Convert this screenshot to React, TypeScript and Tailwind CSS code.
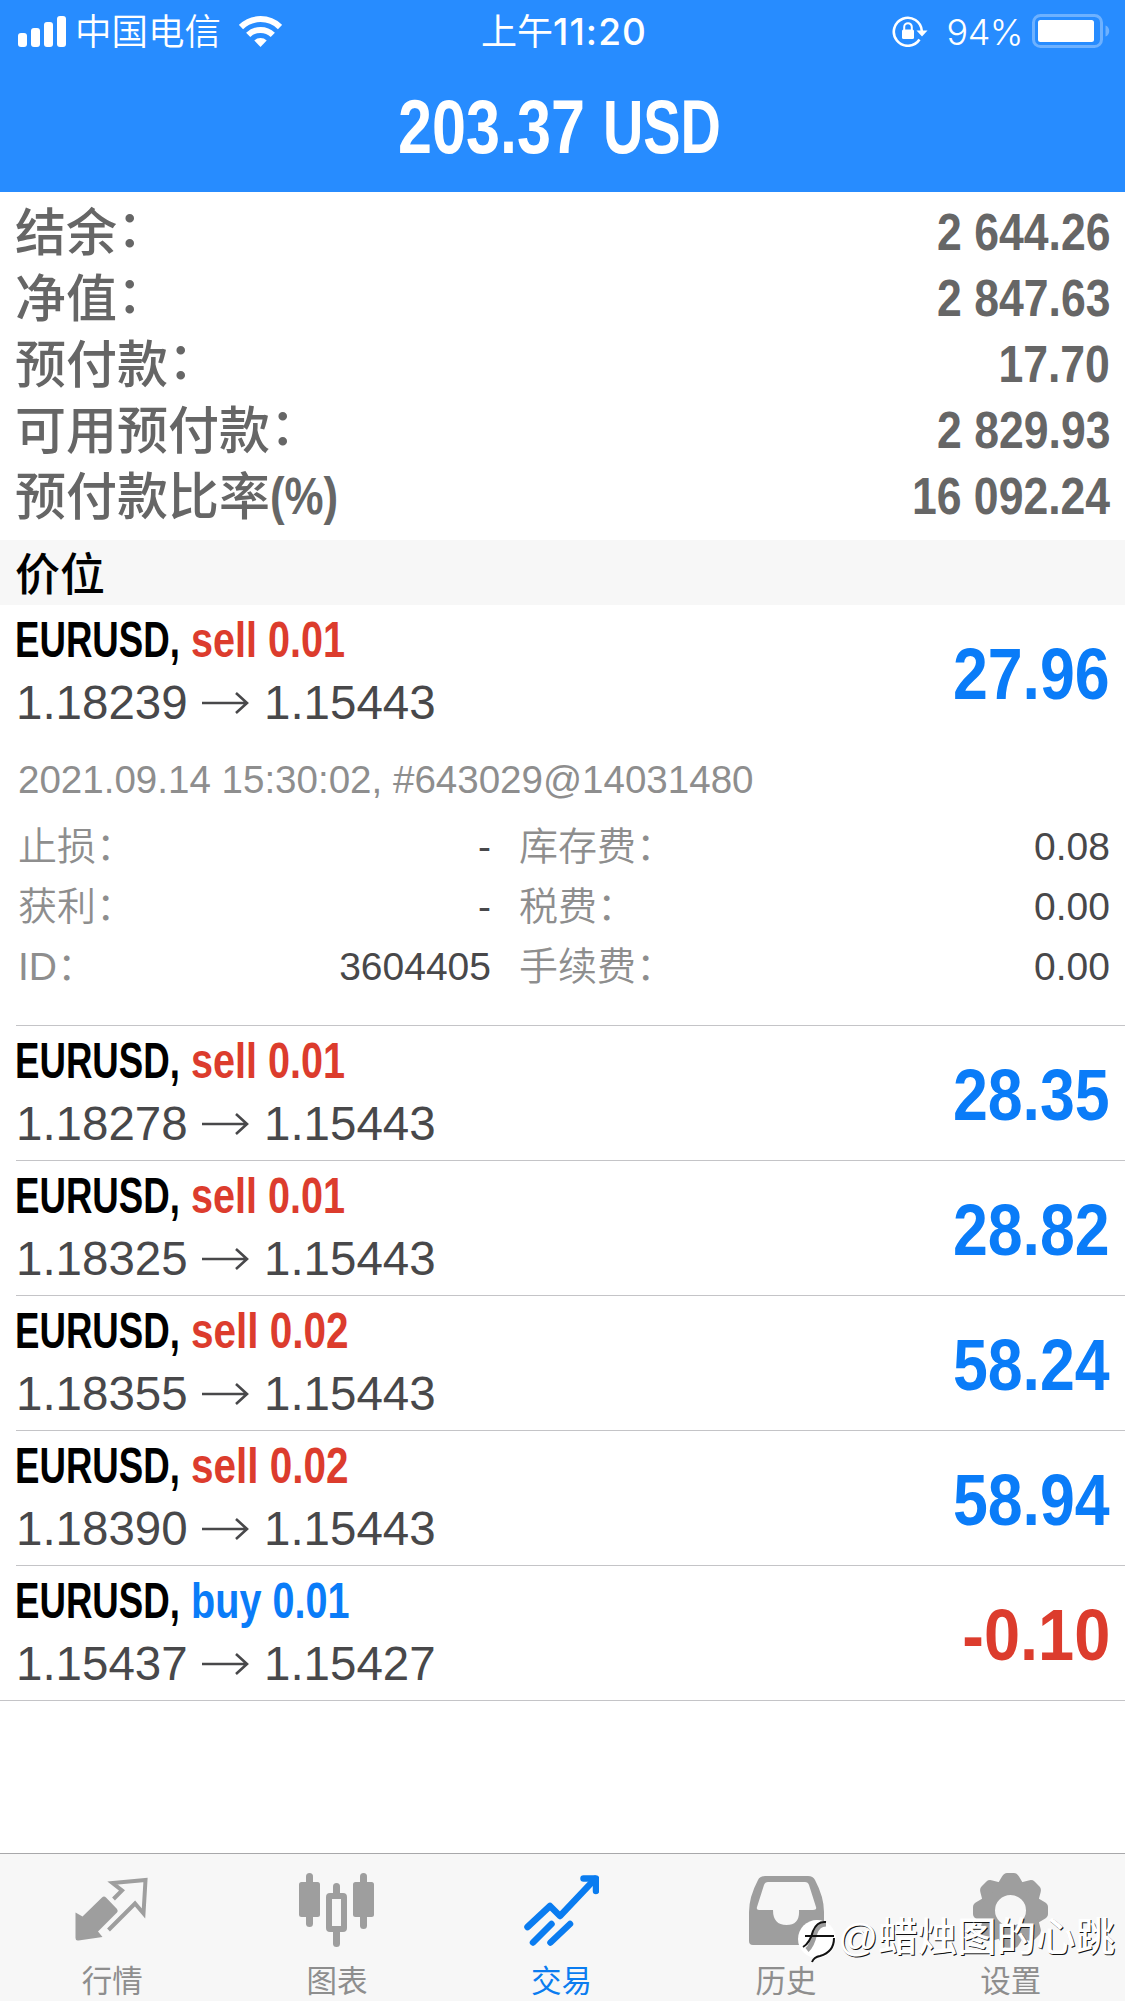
import { ReactNode } from 'react'

type Position = {
  side: 'sell' | 'buy'
  volume: string
  open: string
  current: string
  profit: string
}

const summary = [
  { label: '结余', suffix: '：', value: '2 644.26' },
  { label: '净值', suffix: '：', value: '2 847.63' },
  { label: '预付款', suffix: '：', value: '17.70' },
  { label: '可用预付款', suffix: '：', value: '2 829.93' },
  { label: '预付款比率', suffix: '(%)', value: '16 092.24' },
]

const positions: Position[] = [
  { side: 'sell', volume: '0.01', open: '1.18239', current: '1.15443', profit: '27.96' },
  { side: 'sell', volume: '0.01', open: '1.18278', current: '1.15443', profit: '28.35' },
  { side: 'sell', volume: '0.01', open: '1.18325', current: '1.15443', profit: '28.82' },
  { side: 'sell', volume: '0.02', open: '1.18355', current: '1.15443', profit: '58.24' },
  { side: 'sell', volume: '0.02', open: '1.18390', current: '1.15443', profit: '58.94' },
  { side: 'buy', volume: '0.01', open: '1.15437', current: '1.15427', profit: '-0.10' },
]

const details = [
  ['止损：', '-', '库存费：', '0.08'],
  ['获利：', '-', '税费：', '0.00'],
  ['ID：', '3604405', '手续费：', '0.00'],
]

function StatusBar() {
  return (
    <div className="flex h-[62px] items-center text-white font-['Inter','Noto_Sans_CJK_SC',sans-serif]">
      <div className="flex flex-1 items-center pl-[18px]">
        <svg width="49" height="33" viewBox="0 0 49 33" fill="currentColor">
          <rect x="0" y="18" width="9" height="14" rx="3" />
          <rect x="13" y="13" width="9" height="19" rx="3" />
          <rect x="26" y="7" width="9" height="25" rx="3" />
          <rect x="39" y="1" width="9" height="31" rx="3" />
        </svg>
        <span className="mt-[3px] ml-[8px] text-[36.5px] leading-none font-[350]">中国电信</span>
        <svg className="ml-[18px]" width="43" height="32" viewBox="0 0 43 32" fill="none" stroke="currentColor" strokeWidth="6">
          <path d="M2 12a28 28 0 0 1 39 0" />
          <path d="M9.200 19.900a17.600 17.600 0 0 1 24.600 0" />
          <path d="M21.500 32l-6.200-6.500a9 9 0 0 1 12.400 0z" fill="currentColor" stroke="none" />
        </svg>
      </div>
      <div className="flex items-center text-[36px] leading-none">
        <span className="mt-[2px]">上午</span>
        <span className="mt-px text-[37px] font-medium tracking-[1.1px]">11:20</span>
      </div>
      <div className="flex flex-1 items-center justify-end pr-[15px]">
        <svg width="36" height="32" viewBox="0 0 36 32" fill="none" stroke="currentColor" strokeWidth="2.6">
          <path d="M27.500 24.500A14 14 0 1 1 29.800 16" />
          <path d="M24.500 15.500h11l-5.500 6z" fill="currentColor" stroke="none" />
          <rect x="10" y="14.500" width="12" height="9.500" rx="1.500" fill="currentColor" stroke="none" />
          <path d="M12.200 15v-3a3.800 3.800 0 0 1 7.600 0v3" strokeWidth="2" />
        </svg>
        <span className="mt-px ml-[18px] text-[36px] leading-none font-light tracking-[-0.5px]">94%</span>
        <svg className="ml-[9px]" width="78" height="34" viewBox="0 0 78 34">
          <rect x="1.500" y="1.500" width="68" height="31" rx="7" fill="none" stroke="#6db1ff" strokeWidth="3" />
          <rect x="6" y="6" width="56" height="22" rx="2.500" fill="#fff" />
          <path d="M73.500 11.500c5 1.500 5 9.500 0 11z" fill="#6db1ff" />
        </svg>
      </div>
    </div>
  )
}

function Summary() {
  return (
    <div className="h-[348px] pt-[7px] text-[#666]">
      {summary.map(row => (
        <div key={row.label} className="flex h-[66px] items-center justify-between pr-[15px] pl-[15px]">
          <div className="flex items-center pt-[3px]">
            <span className="text-[51px] leading-[66px] font-medium">{row.label}</span>
            {row.suffix === '：' ? (
              <span className="-mt-[8px] text-[51px] leading-[58px] font-medium">{row.suffix}</span>
            ) : (
              <span className="-mt-[2px] origin-left scale-x-[0.86] text-[51px] leading-[64px] font-bold">{row.suffix}</span>
            )}
          </div>
          <span className="-mt-px origin-right scale-x-[0.865] text-[51.5px] leading-[66px] font-bold">{row.value}</span>
        </div>
      ))}
    </div>
  )
}

function PositionHead({ position }: { position: Position }) {
  const loss = position.profit.startsWith('-')
  return (
    <div className="flex h-[134px] justify-between pr-[15px] pl-[15px]">
      <div>
        <div className="flex h-[66px] pt-[6px] text-[49.5px] leading-[57px] font-bold whitespace-nowrap">
          <span className="w-[176px] origin-left scale-x-[0.74] text-black">EURUSD,</span>
          <span
            className={`origin-left ${position.volume === '0.02' ? 'scale-x-[0.818]' : 'scale-x-[0.8]'} ${position.side === 'sell' ? 'text-[#dc3c2d]' : 'text-[#0a7cf8]'}`}
          >
            {position.side} {position.volume}
          </span>
        </div>
        <div className="flex items-center pl-px text-[47.5px] leading-[63px] text-[#48484a]">
          <span className="w-[186px]">{position.open}</span>
          <svg className="mr-[14px]" width="48" height="24" viewBox="0 0 48 24" fill="none" stroke="currentColor" strokeWidth="2.6">
            <path d="M0 12h45M34 2l11 10-11 10" />
          </svg>
          <span>{position.current}</span>
        </div>
      </div>
      <div
        className={`origin-right pt-[2px] text-[73px] leading-[134px] font-bold ${loss ? 'scale-x-[0.89] text-[#dc3c2d]' : 'scale-x-[0.858] text-[#0a7cf8]'}`}
      >
        {position.profit}
      </div>
    </div>
  )
}

function PositionDetails() {
  return (
    <div className="h-[286px] pt-[11px] pr-[15px] pl-[18px] text-[39px] text-[#8e8e8e]">
      <div className="origin-left scale-x-[0.988] leading-[60px] whitespace-nowrap">
        2021.09.14 15:30:02, #643029@14031480
      </div>
      <div className="mt-[7px]">
        {details.map(([leftLabel, leftValue, rightLabel, rightValue]) => (
          <div key={leftLabel} className="flex h-[60px] leading-[60px]">
            <div className="flex w-[473px] justify-between">
              <span className="font-[350]">{leftLabel}</span>
              <span className="text-[#48484a]">{leftValue}</span>
            </div>
            <div className="ml-[28px] flex flex-1 justify-between">
              <span className="font-[350]">{rightLabel}</span>
              <span className="text-[#48484a]">{rightValue}</span>
            </div>
          </div>
        ))}
      </div>
    </div>
  )
}

const gearTeeth = [0, 45, 90, 135, 180, 225, 270, 315]

const tabs: { label: string; active?: boolean; icon: ReactNode }[] = [
  {
    label: '行情',
    icon: (
      <>
        <path d="M.5 39.500l7 4L27 24.500q2-2 4 0l11 11.500q1.500 2 0 3.500L23 58.500l4.500 5.500-24 3.500q-3 .5-3-2.500z" fill="currentColor" />
        <path d="M38.500 26l8.500-8.500-9.500-7.500L70.500 7l-2 33.500-8.500-10L33.500 57" fill="none" stroke="currentColor" strokeWidth="4" />
      </>
    ),
  },
  {
    label: '图表',
    icon: (
      <>
        <g fill="currentColor">
          <rect x="0" y="9" width="21" height="35" rx="2.500" />
          <rect x="7" y="0" width="7" height="54" rx="3.500" />
          <rect x="54" y="9" width="21" height="35" rx="2.500" />
          <rect x="61" y="0" width="7" height="56" rx="3.500" />
          <rect x="34" y="10" width="7" height="15" rx="3.500" />
          <rect x="34" y="55" width="7" height="19" rx="3.500" />
        </g>
        <rect x="30" y="23" width="15" height="33" rx="1" fill="none" stroke="currentColor" strokeWidth="6" />
      </>
    ),
  },
  {
    label: '交易',
    active: true,
    icon: (
      <g fill="none" stroke="currentColor" strokeWidth="6.500" strokeLinecap="round" strokeLinejoin="round">
        <path d="M3.500 54L26 33l10 10L71 6" />
        <path d="M59.500 5.500H72V18" />
        <path d="M9 69.500l18.500-18.500M26.500 69.500L46 51" />
      </g>
    ),
  },
  {
    label: '历史',
    icon: (
      <path
        fill="currentColor"
        fillRule="evenodd"
        transform="translate(0 3)"
        d="M16 0h43q5 0 7 4 9 17 9 32v29q0 4-4 4H4q-4 0-4-4V36Q0 21 9 4q2-4 7-4zm3 6q-3 0-4 3L8 31q-1 3 2 3h14q0 15 13.500 15T50 34h14q4 0 3-3L60 9q-1-3-4-3z"
      />
    ),
  },
  {
    label: '设置',
    icon: (
      <>
        <circle cx="37.500" cy="37.500" r="23" fill="none" stroke="currentColor" strokeWidth="15" />
        {gearTeeth.map(angle => (
          <path
            key={angle}
            d="M24 12l5-8.500q2-3.500 5-3.500h7q3 0 5 3.500l5 8.500z"
            fill="currentColor"
            transform={`rotate(${angle} 37.5 37.5)`}
          />
        ))}
      </>
    ),
  },
]

function TabBar() {
  return (
    <div className="relative flex h-[148px] border-t border-[#a8a8aa] bg-[#f7f7f7] pr-[2px]">
      {tabs.map(tab => (
        <div
          key={tab.label}
          className={`flex flex-1 flex-col items-center pt-[19px] ${tab.active ? 'text-[#0a7cf0]' : 'text-[#9e9e9e]'}`}
        >
          <svg width="75" height="75" viewBox="0 0 75 75">
            {tab.icon}
          </svg>
          <span className={`mt-[15px] text-[30.5px] leading-[36px] ${tab.active ? '' : 'text-[#8e8e8e]'}`}>{tab.label}</span>
        </div>
      ))}
      <div className="absolute top-[64px] left-[798px] flex items-start text-white">
        <svg width="38" height="48" viewBox="0 0 38 48" fill="none">
          <circle cx="19" cy="21" r="19" fill="#fff" />
          <path d="M28 6q-8 0-11 9-3 13-8 17" stroke="#9e9e9e" strokeWidth="5" />
          <path d="M28 4q-9-1-13 9-3 12-10 16M7 18h29M36 20q0 14-14 18-6 1-8 6" stroke="#111" strokeWidth="2" />
        </svg>
        <span className="ml-[2px] text-[39.5px] leading-[39px] font-medium whitespace-nowrap [text-shadow:1px_1px_0_#111]">
          @蜡烛图的心跳
        </span>
      </div>
    </div>
  )
}

export default function App() {
  return (
    <div className="flex h-[2001px] w-[1125px] flex-col overflow-hidden bg-white font-['Liberation_Sans','Noto_Sans_CJK_SC',sans-serif]">
      <header className="h-[192px] bg-[#278cff]">
        <StatusBar />
        <h1 className="flex pt-[22px] pl-[398px] text-[75.5px] leading-[86px] font-bold text-white">
          <span className="w-[205px] origin-left scale-x-[0.81]">203.37</span>
          <span className="origin-left scale-x-[0.74]">USD</span>
        </h1>
      </header>

      <Summary />

      <div className="h-[65px] bg-[#f7f7f7] pt-[3px] pl-[15px] text-[45px] leading-[65px] font-medium text-black">价位</div>

      <div className="flex-1">
        {positions.map((position, i) => (
          <div key={position.open}>
            <PositionHead position={position} />
            {i === 0 && <PositionDetails />}
            <div className={`h-px bg-[#c4c4c7] ${i === positions.length - 1 ? '' : 'ml-[16px]'}`} />
          </div>
        ))}
      </div>

      <TabBar />
    </div>
  )
}
